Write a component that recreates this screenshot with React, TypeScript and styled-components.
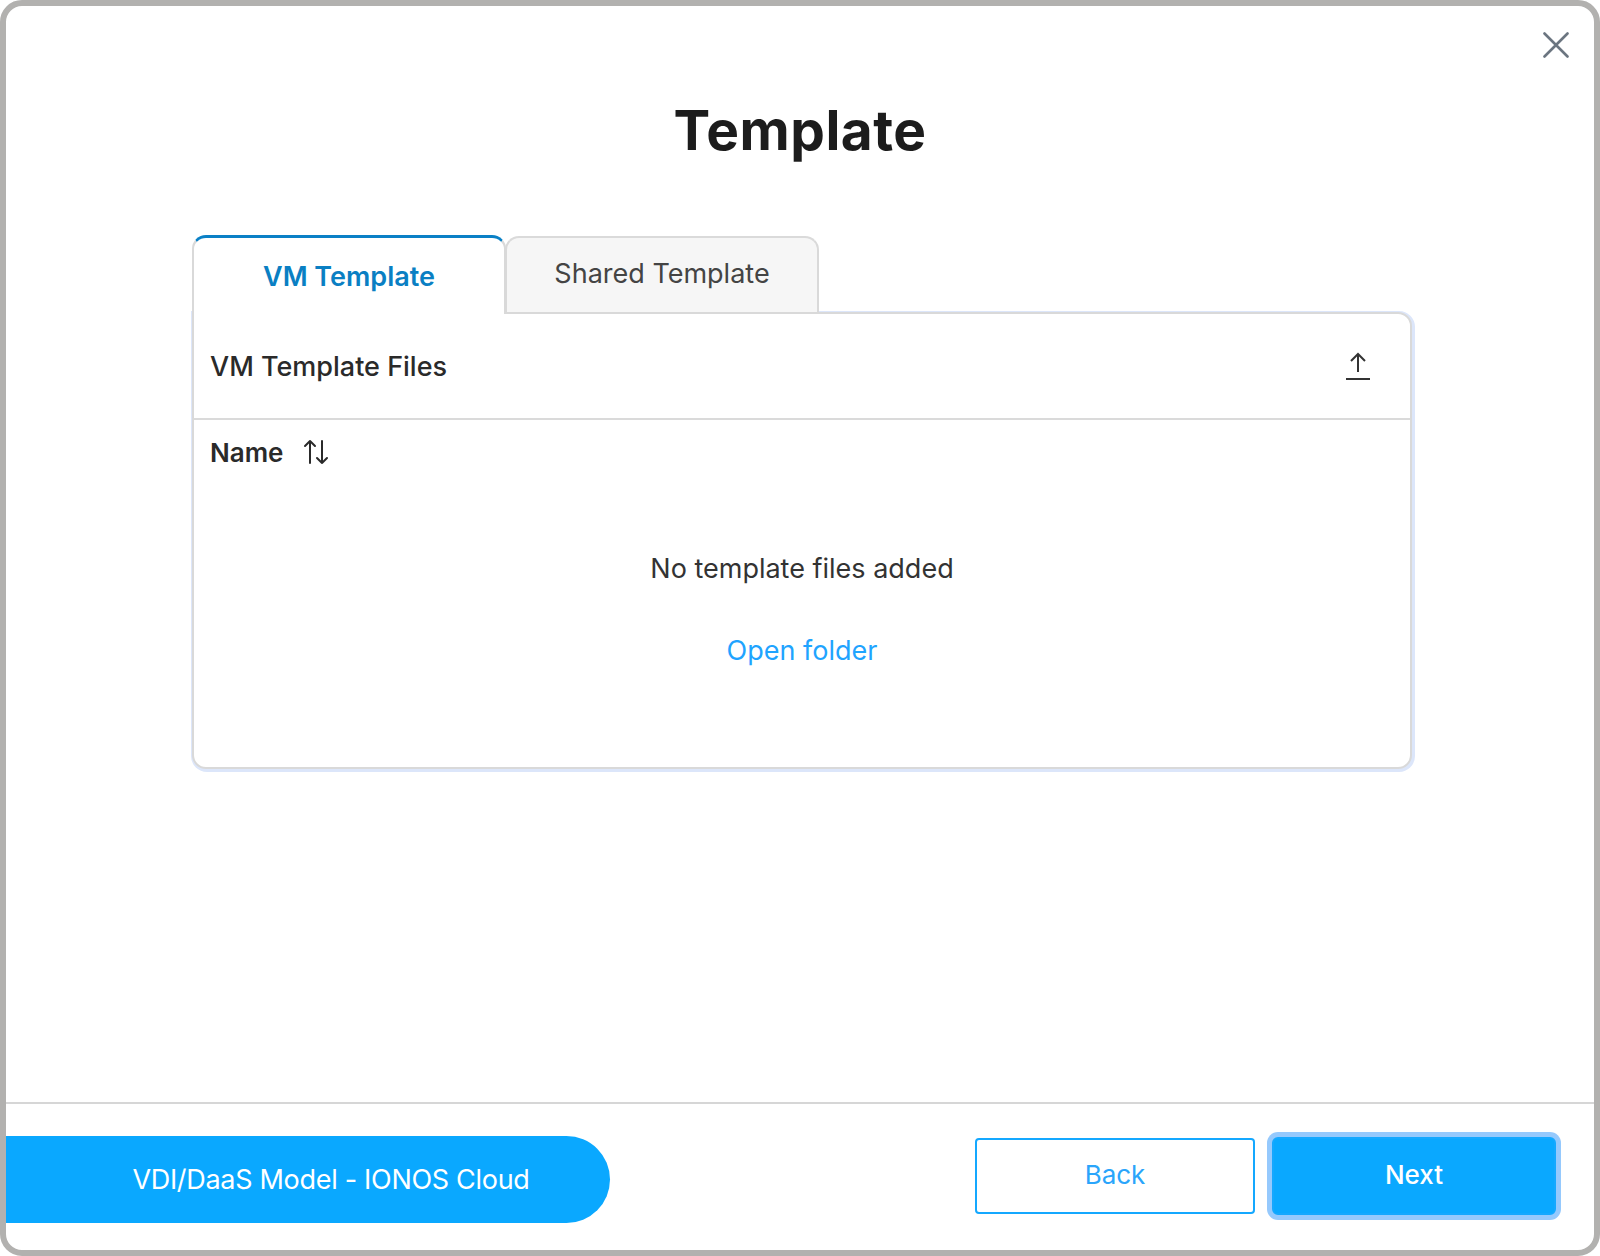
import styled, { createGlobalStyle } from "styled-components";

const GlobalStyle = createGlobalStyle`
    html, body {
        margin: 0;
        padding: 0;
        background: #ffffff;
    }
    * {
        box-sizing: border-box;
    }
    body {
        font-family: Inter, "Noto Sans", "Liberation Sans", sans-serif;
        color: #2b2b2b;
    }
`;

const Window = styled.div`
    position: relative;
    width: 1600px;
    height: 1256px;
    border: 6px solid #b2b1af;
    border-radius: 22px;
    background: #ffffff;
    display: flex;
    flex-direction: column;
    overflow: hidden;
`;

const CloseButton = styled.button`
    position: absolute;
    top: 19px;
    right: 18px;
    width: 40px;
    height: 40px;
    padding: 0;
    border: none;
    background: transparent;
    color: #6b7580;
    display: flex;
    align-items: center;
    justify-content: center;
    cursor: pointer;
`;

const Main = styled.main`
    flex: 1;
    display: flex;
    flex-direction: column;
    align-items: center;
    padding-top: 91px;
`;

const Title = styled.h1`
    margin: 0;
    font-size: 55px;
    line-height: 66px;
    font-weight: 700;
    color: #1c1c1c;
    letter-spacing: 0.5px;
`;

const Panel = styled.section`
    width: 1220px;
    margin-top: 72px;
    margin-left: 4px;
    display: flex;
    flex-direction: column;
`;

const TabRow = styled.div`
    display: flex;
    align-items: flex-end;
`;

const Tab = styled.button<{ $active?: boolean }>`
    position: relative;
    z-index: ${(p) => (p.$active ? 1 : 0)};
    width: 314px;
    height: ${(p) => (p.$active ? "79px" : "76px")};
    margin-bottom: ${(p) => (p.$active ? "-2px" : "0")};
    padding: ${(p) => (p.$active ? "0" : "0 0 4px")};
    font-family: Inter, "Noto Sans", sans-serif;
    font-size: 27px;
    font-weight: ${(p) => (p.$active ? 600 : 400)};
    color: ${(p) => (p.$active ? "#0a7fc3" : "#444444")};
    background: ${(p) => (p.$active ? "#ffffff" : "#f6f6f6")};
    border: 2px solid #d9d9d9;
    border-top: ${(p) => (p.$active ? "3px solid #0a80c6" : "2px solid #dadada")};
    border-bottom: none;
    border-radius: 14px 14px 0 0;
    cursor: pointer;
    & + & {
        margin-left: -1px;
    }
`;

const Card = styled.div`
    border: 2px solid #d9d9d9;
    border-radius: 0 14px 14px 14px;
    box-shadow: 1px 1px 0 2px #dce6fa;
    background: #ffffff;
    display: flex;
    flex-direction: column;
`;

const CardHeader = styled.div`
    height: 106px;
    display: flex;
    align-items: center;
    justify-content: space-between;
    padding: 0 38px 0 16px;
    border-bottom: 2px solid #dadada;
`;

const CardTitle = styled.h2`
    margin: 0;
    font-size: 27px;
    font-weight: 500;
    color: #2a2a2a;
`;

const IconButton = styled.button`
    width: 28px;
    height: 32px;
    padding: 0;
    border: none;
    background: transparent;
    color: #333333;
    display: flex;
    align-items: center;
    justify-content: center;
    cursor: pointer;
`;

const ColumnHead = styled.div`
    display: flex;
    align-items: center;
    gap: 20px;
    padding: 17px 16px 0;
    height: 47px;
    font-size: 26px;
    font-weight: 600;
    color: #2a2a2a;
`;

const Empty = styled.div`
    display: flex;
    flex-direction: column;
    align-items: center;
    padding: 86px 0 100px;
    gap: 50px;
`;

const EmptyText = styled.p`
    margin: 0;
    font-size: 27px;
    line-height: 32px;
    color: #333333;
`;

const LinkButton = styled.button`
    padding: 0;
    border: none;
    background: transparent;
    font-family: Inter, "Noto Sans", sans-serif;
    font-size: 27px;
    line-height: 32px;
    color: #1fa4ff;
    cursor: pointer;
`;

const Footer = styled.footer`
    height: 148px;
    border-top: 2px solid #d6d6d6;
    display: flex;
    align-items: flex-start;
    justify-content: space-between;
    padding: 32px 38px 0 0;
`;

const ModelPill = styled.div`
    height: 87px;
    width: 604px;
    padding: 0 0 0 46px;
    border-radius: 0 44px 44px 0;
    background: #0aa8ff;
    color: #ffffff;
    display: flex;
    align-items: center;
    justify-content: center;
    font-size: 27px;
    font-weight: 400;
    letter-spacing: -0.3px;
    white-space: nowrap;
`;

const Actions = styled.div`
    display: flex;
    align-items: center;
    gap: 17px;
    height: 80px;
`;

const ActionButton = styled.button<{ $primary?: boolean }>`
    width: ${(p) => (p.$primary ? "284px" : "280px")};
    height: ${(p) => (p.$primary ? "78px" : "76px")};
    padding: 0 0 4px;
    font-family: Inter, "Noto Sans", sans-serif;
    font-size: 26px;
    font-weight: ${(p) => (p.$primary ? 500 : 400)};
    border-radius: ${(p) => (p.$primary ? "6px" : "4px")};
    border: 2px solid #14a8ff;
    background: ${(p) => (p.$primary ? "#0aa8ff" : "#ffffff")};
    color: ${(p) => (p.$primary ? "#ffffff" : "#2aa5fb")};
    box-shadow: ${(p) => (p.$primary ? "0 0 0 5px #95c9fd" : "none")};
    cursor: pointer;
`;

function CloseIcon() {
    return (
        <svg width="26" height="26" viewBox="0 0 26 26" fill="none" stroke="currentColor" strokeWidth="2.6" strokeLinecap="round">
            <path d="M1.5 1.5 24.5 24.5M24.5 1.5 1.5 24.5" />
        </svg>
    );
}

function UploadIcon() {
    return (
        <svg width="26" height="30" viewBox="0 0 26 30" fill="none" stroke="currentColor" strokeWidth="2">
            <path d="M13 21V3M6 10l7-7 7 7" strokeLinejoin="miter" />
            <path d="M1 28h24" />
        </svg>
    );
}

function SortIcon() {
    return (
        <svg width="26" height="26" viewBox="0 0 26 26" fill="none" stroke="currentColor" strokeWidth="2" strokeLinecap="round" strokeLinejoin="round">
            <path d="M7 24V2M2 7l5-5 5 5" />
            <path d="M19 2v22M14 19l5 5 5-5" />
        </svg>
    );
}

export default function App() {
    return (
        <>
            <GlobalStyle />
            <Window>
                <CloseButton aria-label="Close">
                    <CloseIcon />
                </CloseButton>
                <Main>
                    <Title>Template</Title>
                    <Panel>
                        <TabRow>
                            <Tab $active>VM Template</Tab>
                            <Tab>Shared Template</Tab>
                        </TabRow>
                        <Card>
                            <CardHeader>
                                <CardTitle>VM Template Files</CardTitle>
                                <IconButton aria-label="Upload">
                                    <UploadIcon />
                                </IconButton>
                            </CardHeader>
                            <ColumnHead>
                                Name
                                <SortIcon />
                            </ColumnHead>
                            <Empty>
                                <EmptyText>No template files added</EmptyText>
                                <LinkButton>Open folder</LinkButton>
                            </Empty>
                        </Card>
                    </Panel>
                </Main>
                <Footer>
                    <ModelPill>VDI/DaaS Model - IONOS Cloud</ModelPill>
                    <Actions>
                        <ActionButton>Back</ActionButton>
                        <ActionButton $primary>Next</ActionButton>
                    </Actions>
                </Footer>
            </Window>
        </>
    );
}
